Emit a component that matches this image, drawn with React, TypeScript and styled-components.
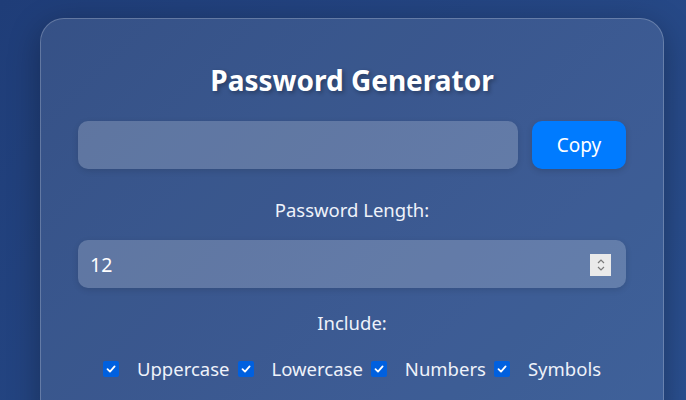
import React, { useState } from 'react';
import styled, { createGlobalStyle } from 'styled-components';

const GlobalStyle = createGlobalStyle`
  html, body {
    margin: 0;
    padding: 0;
  }

  body {
    min-height: 100vh;
    background: linear-gradient(135deg, #1f3d78 0%, #2a4f8f 100%);
    font-family: 'Noto Sans', 'Open Sans', sans-serif;
    color: #ffffff;
    overflow: hidden;
  }
`;

const Page = styled.div`
  display: flex;
  justify-content: center;
  padding: 18px 0 0 18px;
  height: 382px;
`;

const Card = styled.div`
  width: 548px;
  padding: 38px 37px 36px 37px;
  background: rgba(255, 255, 255, 0.1);
  border: 1px solid rgba(255, 255, 255, 0.22);
  border-radius: 24px;
  box-shadow: 0 8px 32px rgba(0, 0, 0, 0.3);
  display: flex;
  flex-direction: column;
  align-items: stretch;
  height: 600px;
`;

const Title = styled.h1`
  margin: 4px 0 22px;
  font-size: 28px;
  font-weight: 700;
  text-align: center;
  line-height: 38px;
  text-shadow: 2px 2px 4px rgba(0, 0, 0, 0.3);
`;

const OutputRow = styled.div`
  display: flex;
  gap: 14px;
`;

const Field = styled.input`
  flex: 1;
  min-width: 0;
  height: 48px;
  box-sizing: border-box;
  padding: 0 12px;
  border: none;
  border-radius: 10px;
  background: rgba(255, 255, 255, 0.2);
  box-shadow: 0 2px 6px rgba(0, 0, 0, 0.12);
  color: #ffffff;
  font-family: inherit;
  font-size: 18px;
  outline: none;
`;

const CopyButton = styled.button`
  width: 94px;
  height: 48px;
  border: none;
  border-radius: 10px;
  background: #007bff;
  color: #ffffff;
  font-family: inherit;
  font-size: 19px;
  box-shadow: 0 2px 6px rgba(0, 0, 0, 0.15);
  cursor: pointer;
`;

const Label = styled.div<{ $gap: number }>`
  margin-top: ${(p) => p.$gap}px;
  text-align: center;
  font-size: 18.5px;
  line-height: 26px;
  color: #eef2fa;
`;

const NumberWrap = styled.div`
  position: relative;
  margin-top: 17px;
`;

const NumberField = styled(Field)`
  width: 100%;
  padding-left: 12px;
  font-size: 19.5px;
`;

const Spinner = styled.div`
  position: absolute;
  right: 15px;
  top: 14px;
  width: 21px;
  height: 22px;
  background: #eaeaea;
  display: flex;
  align-items: center;
  justify-content: center;
`;

const Options = styled.div`
  margin-top: 20px;
  display: flex;
  justify-content: center;
  gap: 8px;
`;

const Option = styled.label`
  display: inline-flex;
  align-items: center;
  gap: 18px;
  font-size: 18.5px;
  line-height: 26px;
  color: #eef2fa;
`;

const Box = styled.span`
  width: 16px;
  height: 16px;
  border-radius: 2px;
  background: #0060df;
  display: inline-flex;
  align-items: center;
  justify-content: center;
`;

const Check = () => (
  <Box>
    <svg width="12" height="12" viewBox="0 0 12 12">
      <path d="M2.5 6.2 L5 8.6 L9.6 3.4" fill="none" stroke="#ffffff" strokeWidth="1.8" strokeLinecap="round" strokeLinejoin="round" />
    </svg>
  </Box>
);

export default function App() {
  const [length, setLength] = useState('12');
  const options = ['Uppercase', 'Lowercase', 'Numbers', 'Symbols'];

  return (
    <>
      <GlobalStyle />
      <Page>
        <Card>
          <Title>Password Generator</Title>
          <OutputRow>
            <Field readOnly value="" />
            <CopyButton>Copy</CopyButton>
          </OutputRow>
          <Label $gap={28}>Password Length:</Label>
          <NumberWrap>
            <NumberField value={length} onChange={(e) => setLength(e.target.value)} />
            <Spinner>
              <svg width="10" height="16" viewBox="0 0 10 16">
                <path d="M2 6 L5 3 L8 6 M2 10 L5 13 L8 10" fill="none" stroke="#7a7a7a" strokeWidth="1.2" />
              </svg>
            </Spinner>
          </NumberWrap>
          <Label $gap={22}>Include:</Label>
          <Options>
            {options.map((o) => (
              <Option key={o}>
                <Check />
                {o}
              </Option>
            ))}
          </Options>
        </Card>
      </Page>
    </>
  );
}
